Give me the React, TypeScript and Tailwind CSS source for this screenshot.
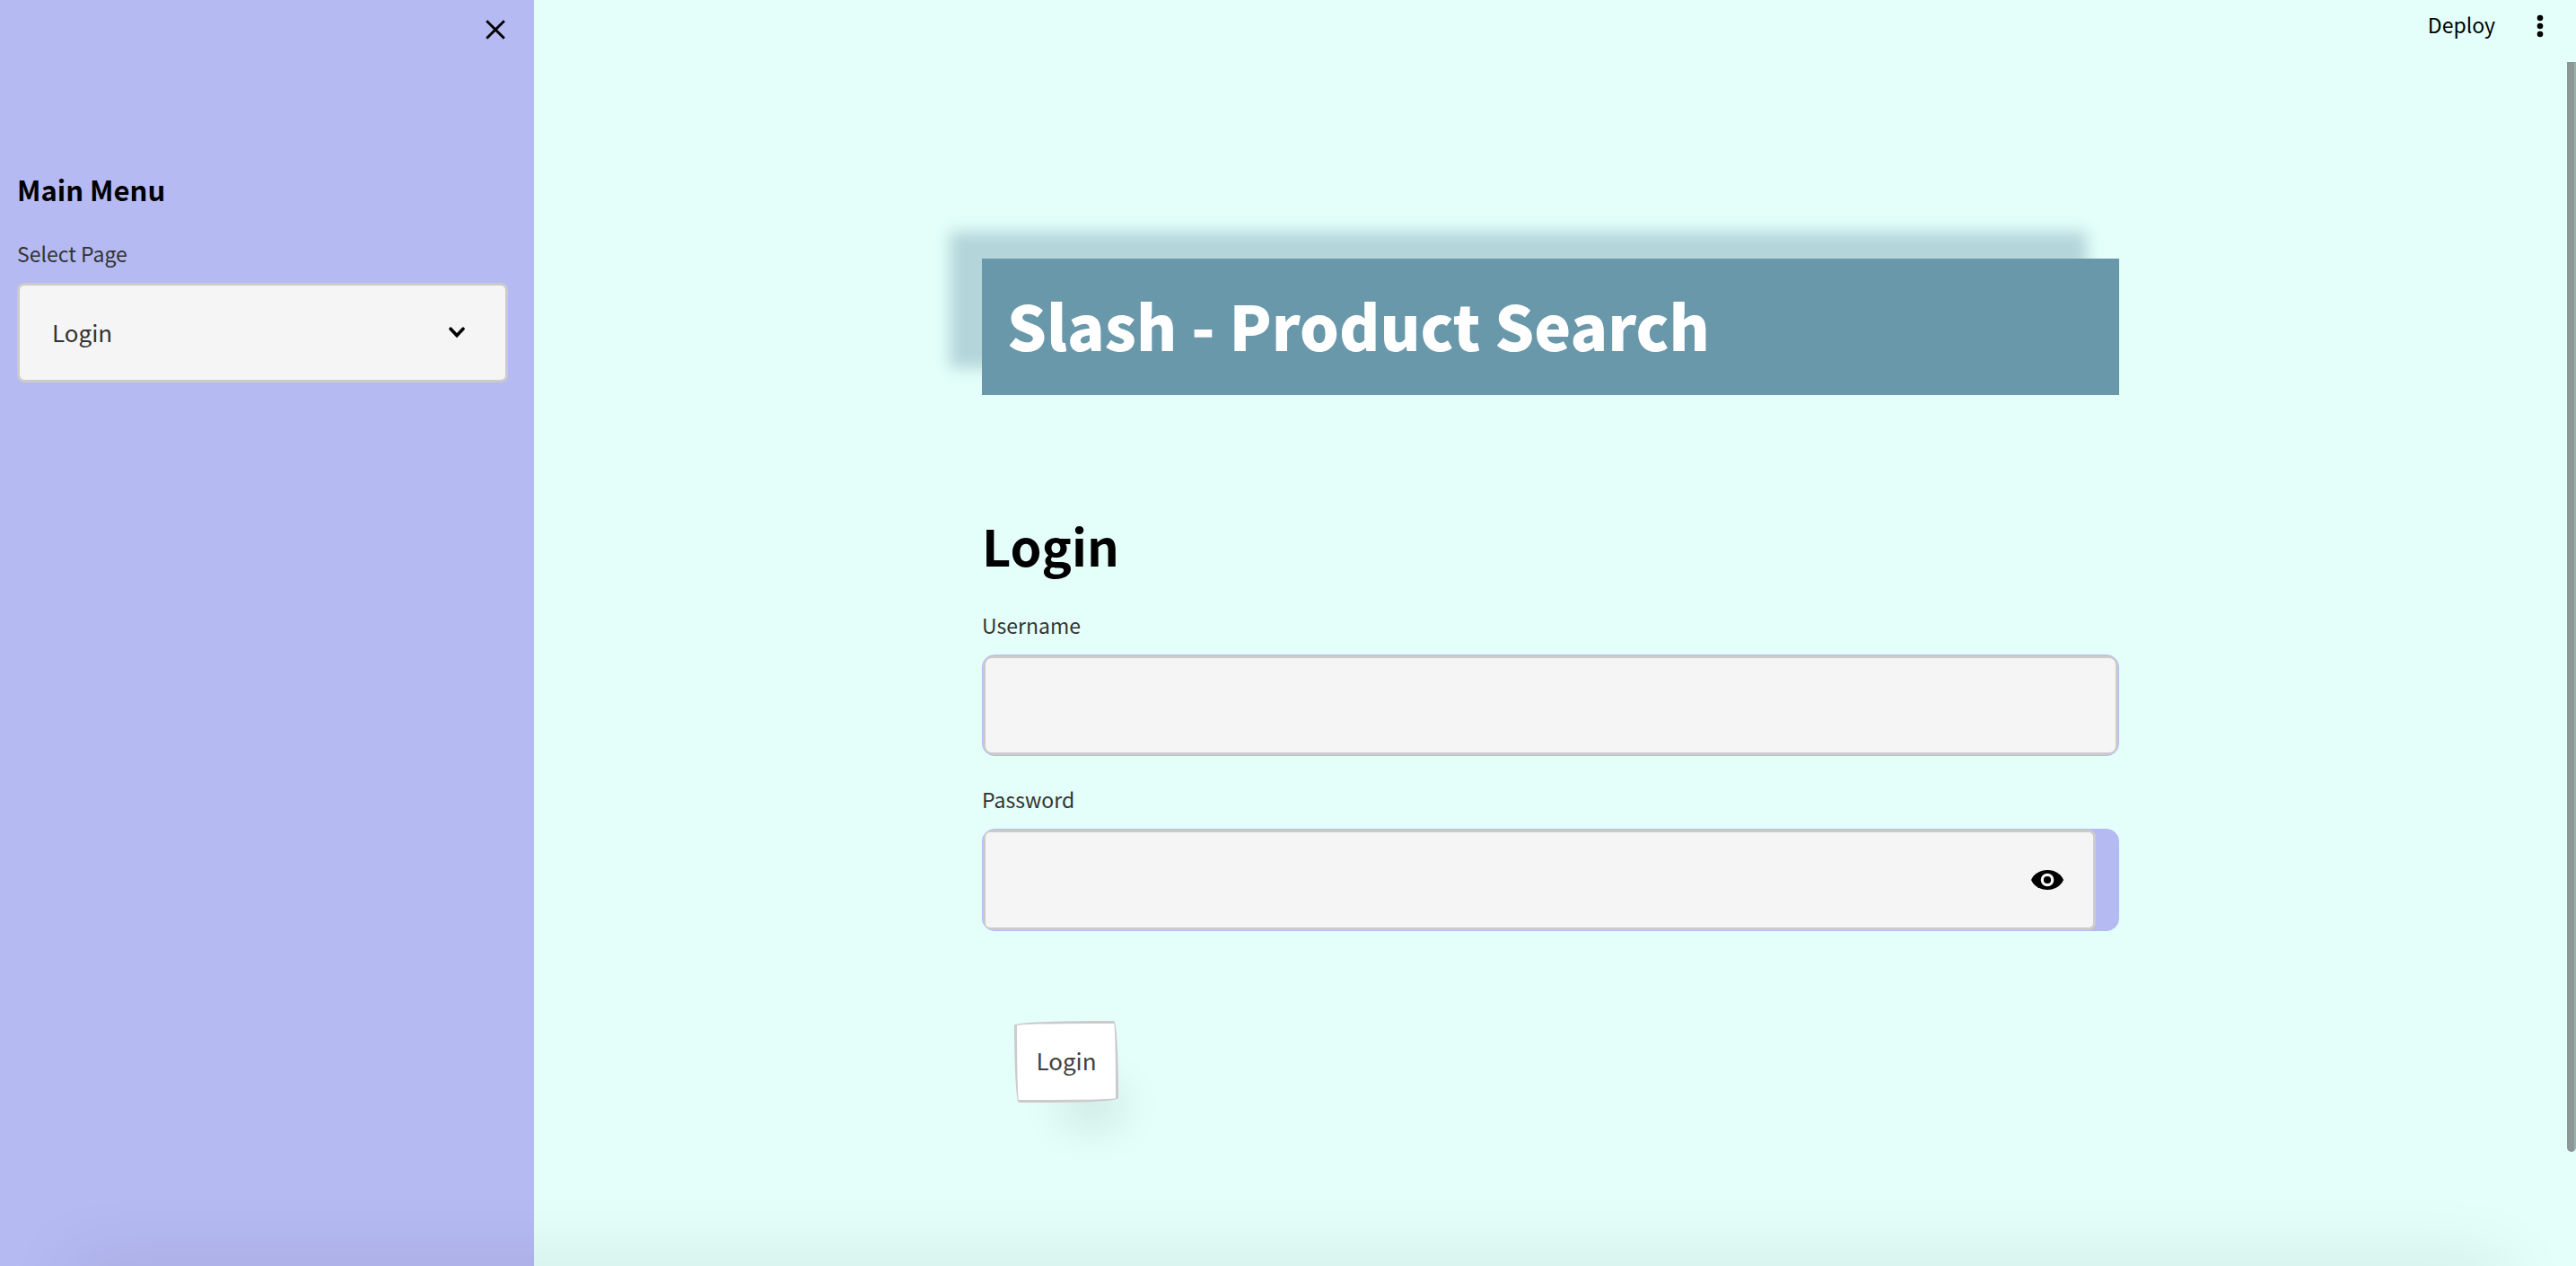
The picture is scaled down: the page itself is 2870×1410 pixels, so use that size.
import { useState } from "react";

const inputClass =
  "block h-full min-w-0 flex-1 border-[3px] border-[#cbcbcb] bg-[#f5f5f5] px-9 text-[26px] text-[#333333] outline-none";

function CloseIcon() {
  return (
    <svg viewBox="0 0 22 22" className="size-[22px]" stroke="black" strokeWidth="2.9" fill="none" aria-hidden="true">
      <path d="M1.2 1.2 20.8 20.8M20.8 1.2 1.2 20.8" />
    </svg>
  );
}

function ChevronIcon() {
  return (
    <svg viewBox="0 0 18 13" className="h-[13px] w-[18px]" fill="none" stroke="black" strokeWidth="3.6" strokeLinecap="round" strokeLinejoin="miter" aria-hidden="true">
      <path d="M2 2.2 9 9.6 16 2.2" />
    </svg>
  );
}

function EyeIcon() {
  return (
    <svg viewBox="0 0 36 22" className="h-[22px] w-9" aria-hidden="true">
      <path d="M0 11C3 4 10 0 18 0s15 4 18 11c-3 7-10 11-18 11S3 18 0 11Z" fill="black" />
      <circle cx="18" cy="11" r="5.7" fill="black" stroke="#f5f5f5" strokeWidth="3.2" />
    </svg>
  );
}

function DotsIcon() {
  return (
    <svg viewBox="0 0 8 26" className="h-[26px] w-2" aria-hidden="true">
      <circle cx="4" cy="4" r="3.3" />
      <circle cx="4" cy="13" r="3.3" />
      <circle cx="4" cy="22" r="3.3" />
    </svg>
  );
}

function Sidebar() {
  const [page, setPage] = useState("Login");
  return (
    <aside className="flex w-[595px] shrink-0 flex-col bg-[#b6baf3]">
      <div className="flex h-[191px] items-start justify-end px-8 pt-[22px]">
        <button type="button" aria-label="Close menu">
          <CloseIcon />
        </button>
      </div>
      <div className="pr-[29px] pl-[19px]">
        <h2 className="text-[31px] leading-10 font-bold text-black">Main Menu</h2>
        <label htmlFor="page" className="mt-[35px] block text-[23px] leading-8 text-[#333333]">
          Select Page
        </label>
        <div className="relative mt-[17px]">
          <select
            id="page"
            value={page}
            onChange={(e) => setPage(e.target.value)}
            className="block h-[111px] w-full appearance-none rounded-lg border-[3px] border-[#cbcbcb] bg-[#f5f5f5] px-9 pb-px text-[26px] leading-10 text-[#333333]"
          >
            <option>Login</option>
            <option>Register</option>
          </select>
          <span className="pointer-events-none absolute inset-y-0 right-12 flex items-center">
            <ChevronIcon />
          </span>
        </div>
      </div>
    </aside>
  );
}

export default function App() {
  const [visible, setVisible] = useState(false);
  return (
    <div className="relative flex h-screen overflow-hidden bg-[#e4fffa] font-['Noto_Sans_CJK_SC',sans-serif]">
      <Sidebar />
      <div className="flex min-w-0 flex-1 flex-col">
        <header className="flex h-[69px] shrink-0 items-start justify-end gap-[46px] pr-9">
          <button type="button" className="mt-[11px] text-[23px] leading-8 text-black">
            Deploy
          </button>
          <button type="button" aria-label="More options" className="mt-4">
            <DotsIcon />
          </button>
        </header>
        <div className="flex min-h-0 flex-1">
          <main className="flex min-w-0 flex-1 justify-center pt-[219px]">
            <div className="w-full max-w-[1267px]">
              <h1 className="bg-[#6a98ab] px-7 pt-[27px] pb-[33px] text-[69px] leading-[92px] font-black text-white shadow-[-36px_-30px_16px_#b4d5da]">
                Slash - Product Search
              </h1>
              <form onSubmit={(e) => e.preventDefault()}>
                <h2 className="mt-[131px] text-[56px] leading-[72px] font-bold text-black">Login</h2>
                <label htmlFor="username" className="mt-[37px] block text-[23px] leading-8 text-[#333333]">
                  Username
                </label>
                <div className="mt-[17px] flex h-[113px] overflow-hidden rounded-[14px] border border-[#b6baf3] bg-[#b6baf3]">
                  <input id="username" type="text" className={`${inputClass} rounded-[10px]`} />
                </div>
                <label htmlFor="password" className="mt-8 block text-[23px] leading-8 text-[#333333]">
                  Password
                </label>
                <div className="relative mt-[17px] flex h-[114px] overflow-hidden rounded-[14px] border border-[#b6baf3] bg-[#b6baf3] pr-[25px]">
                  <input id="password" type={visible ? "text" : "password"} className={`${inputClass} rounded-[8px]`} />
                  <button
                    type="button"
                    aria-label="Show password"
                    onClick={() => setVisible(!visible)}
                    className="absolute inset-y-0 right-[61px] flex items-center"
                  >
                    <EyeIcon />
                  </button>
                </div>
                <button
                  type="submit"
                  className="mt-[100px] ml-9 h-[91px] w-[116px] rounded-[255px_15px_225px_15px/15px_225px_15px_255px] border-[3px] border-[#cbcbcb] bg-white pb-1 text-[26px] leading-10 text-[#41403e] shadow-[28px_48px_50px_-30px_rgba(0,0,0,0.18)]"
                >
                  Login
                </button>
              </form>
            </div>
          </main>
          <div className="h-[1214px] w-[10px] shrink-0 rounded-b-full border-r-2 border-[#9dafac] bg-[#8a9896]" />
        </div>
      </div>
      <div className="pointer-events-none absolute inset-x-[80px] top-full h-10 shadow-[0_0_80px_rgba(0,0,0,0.13)]" />
    </div>
  );
}
